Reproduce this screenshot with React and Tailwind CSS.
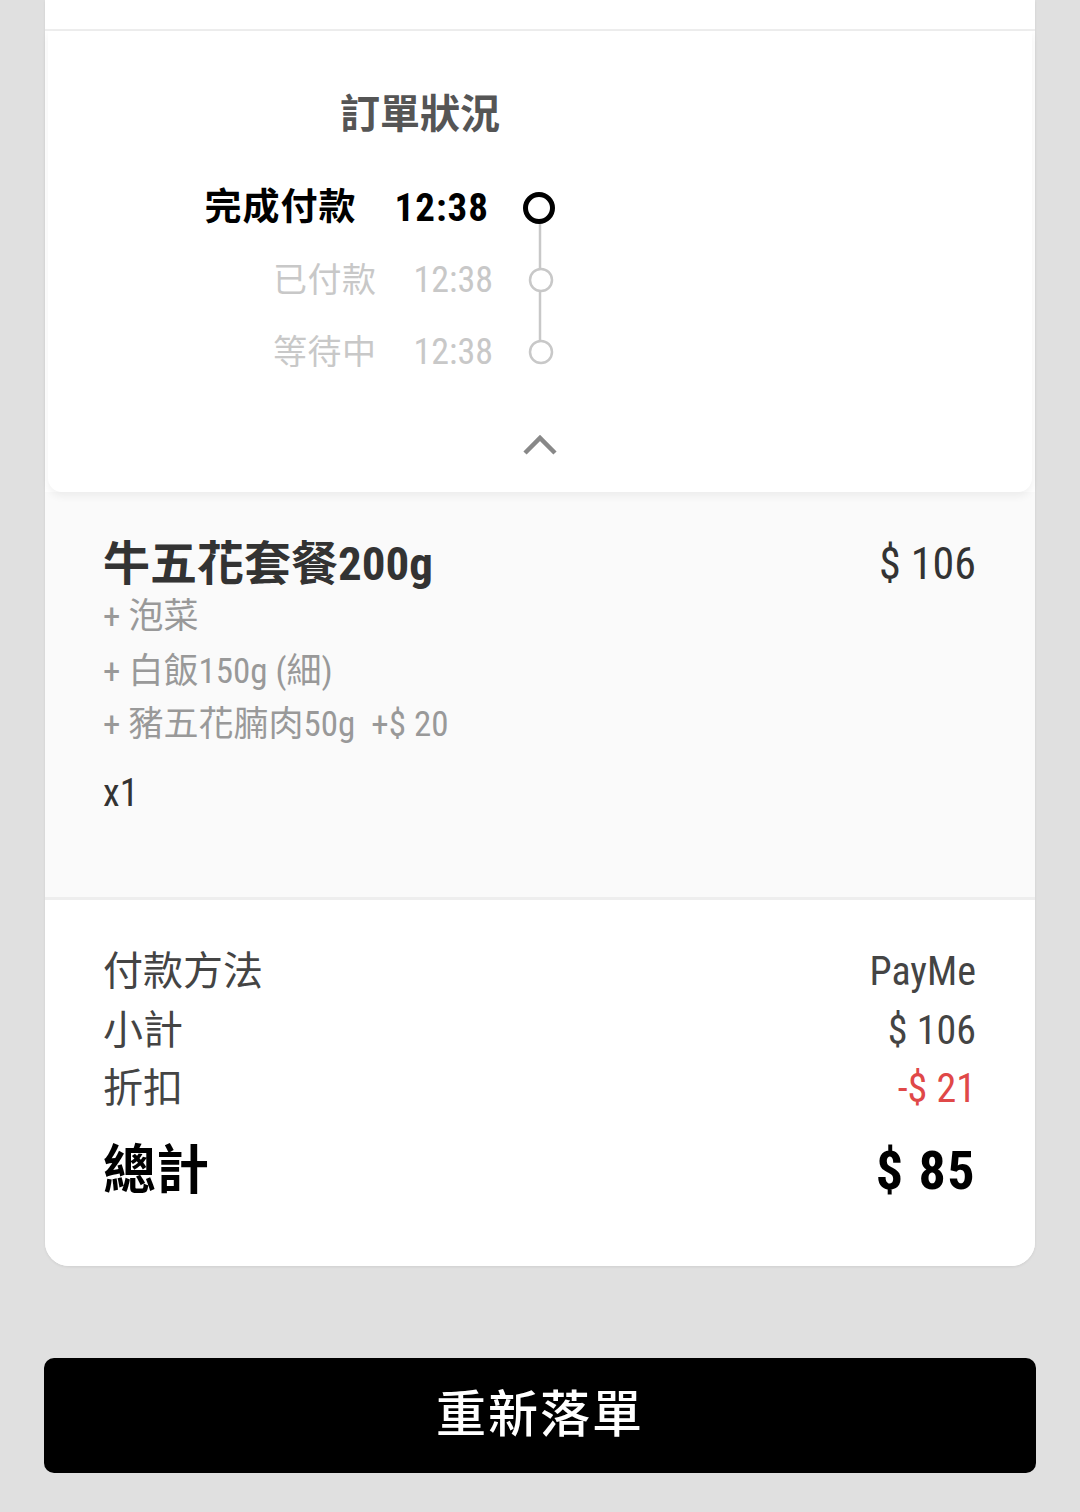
import React from "react";

const font = { fontFamily: '"Roboto", "Noto Sans CJK TC", sans-serif' };

function Row({ label, time, active }) {
  return (
    <div className={"flex h-[72px] items-center justify-end " + (active ? "pr-[31px]" : "pr-[27px]")}>
      <span
        className={
          active
            ? "text-[37px] font-bold tracking-[1px] text-black"
            : "text-[34px] font-normal tracking-[0.5px] text-[#c8c8c8]"
        }
      >
        {label}
      </span>
      <span
        className={
          active
            ? "ml-[38px] text-[39px] font-bold tracking-[1px] text-black font-stretch-condensed"
            : "ml-[37px] text-[36px] font-normal text-[#c8c8c8] font-stretch-condensed"
        }
      >
        {time}
      </span>
    </div>
  );
}

export default function App() {
  return (
    <div className="min-h-[1512px] w-[1080px] bg-[#e0e0e0]" style={font}>
      <div className="mx-[45px] flex flex-col rounded-b-[24px] bg-white shadow-[0_1px_3px_rgba(0,0,0,0.08)]">
        <div className="h-[29px] bg-white" />
        <div className="h-[2px] bg-[#eeeeee]" />
        {/* status card */}
        <div className="relative z-10 mx-[3px] flex flex-col rounded-b-[14px] bg-white pb-[29px] pt-[59px] shadow-[0_4px_8px_rgba(0,0,0,0.06)]">
          <div className="pl-[292px] text-[40px] font-bold leading-[50px] text-[#555555]">
            訂單狀況
          </div>
          <div className="mt-[32px] flex">
            <div className="flex w-[472px] flex-col">
              <Row label="完成付款" time="12:38" active />
              <Row label="已付款" time="12:38" />
              <Row label="等待中" time="12:38" />
            </div>
            <svg width="40" height="216" viewBox="0 0 40 216" className="block">
              <line x1="20" y1="50" x2="20" y2="170" stroke="#c8c8c8" strokeWidth="2.5" />
              <circle cx="19" cy="36" r="13.5" fill="white" stroke="#000" strokeWidth="5" />
              <circle cx="21" cy="108" r="11" fill="white" stroke="#c8c8c8" strokeWidth="2.5" />
              <circle cx="21" cy="180" r="11" fill="white" stroke="#c8c8c8" strokeWidth="2.5" />
            </svg>
          </div>
          <div className="mt-[35px] flex justify-center">
            <svg width="40" height="40" viewBox="0 0 40 40">
              <polyline points="5,30 20,15 35,30" fill="none" stroke="#888888" strokeWidth="4.5" />
            </svg>
          </div>
        </div>
        {/* item section */}
        <div className="flex flex-col bg-[#fafafa] pl-[58px] pr-[59px] pb-[79px] pt-[40px]">
          <div className="flex items-center justify-between">
            <span className="text-[47px] font-bold leading-[64px] text-[#333333] font-stretch-condensed">
              牛五花套餐200g
            </span>
            <span className="text-[44px] leading-[64px] text-[#333333] font-stretch-condensed">$ 106</span>
          </div>
          <div className="-mt-[2px] flex flex-col text-[35px] leading-[52.5px] text-[#999999] font-stretch-condensed">
            <span className="h-[52px] leading-[46px]">+ 泡菜</span>
            <span>+ 白飯150g (細)</span>
            <span>+ 豬五花腩肉50g&nbsp;&nbsp;+$ 20</span>
          </div>
          <div className="mt-[17px] text-[38px] leading-[50px] text-[#333333] font-stretch-condensed">x1</div>
        </div>
        <div className="h-[3px] bg-[#eeeeee]" />
        {/* summary */}
        <div className="flex flex-col rounded-b-[24px] bg-white pl-[58px] pr-[59px] pb-[60px] pt-[43px] text-[40px] leading-[58.5px] text-[#444444]">
          <div className="flex justify-between">
            <span>付款方法</span>
            <span className="font-stretch-condensed">PayMe</span>
          </div>
          <div className="flex justify-between">
            <span>小計</span>
            <span className="font-stretch-condensed">$ 106</span>
          </div>
          <div className="flex justify-between">
            <span>折扣</span>
            <span className="text-[#e04848] font-stretch-condensed">-$ 21</span>
          </div>
          <div className="mt-[17px] flex justify-between text-[53px] font-bold leading-[70px] text-black">
            <span>總計</span>
            <span className="text-[54px] tracking-[1.5px] font-stretch-condensed">$ 85</span>
          </div>
        </div>
      </div>
      <div className="mx-[44px] mt-[92px] flex h-[115px] items-center justify-center rounded-[10px] bg-black text-[50px] font-medium tracking-[2px] text-white">
        重新落單
      </div>
    </div>
  );
}
